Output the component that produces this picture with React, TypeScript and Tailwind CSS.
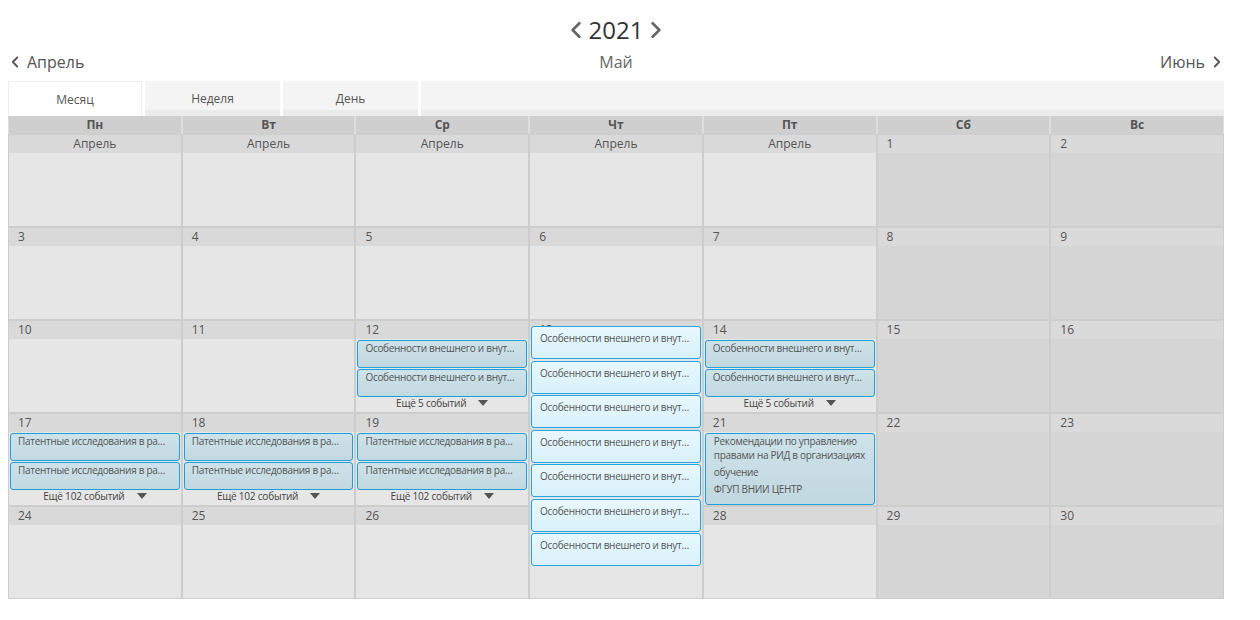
import React from "react";

type Ev = { title: string; lines?: string[]; tall?: boolean };
type Day = {
  label: string;
  prev?: boolean;
  weekend?: boolean;
  events?: Ev[];
  more?: string;
};

const WEEKDAYS = ["Пн", "Вт", "Ср", "Чт", "Пт", "Сб", "Вс"];

const OSOB = "Особенности внешнего и внутреннего контроля качества";
const PATENT = "Патентные исследования в рамках проектов";

const osob: Ev[] = [{ title: OSOB }, { title: OSOB }];
const patent: Ev[] = [{ title: PATENT }, { title: PATENT }];

// сетка мая 2021
const weeks: Day[][] = [
  [
    { label: "Апрель", prev: true },
    { label: "Апрель", prev: true },
    { label: "Апрель", prev: true },
    { label: "Апрель", prev: true },
    { label: "Апрель", prev: true },
    { label: "1", weekend: true },
    { label: "2", weekend: true },
  ],
  [
    { label: "3" },
    { label: "4" },
    { label: "5" },
    { label: "6" },
    { label: "7" },
    { label: "8", weekend: true },
    { label: "9", weekend: true },
  ],
  [
    { label: "10" },
    { label: "11" },
    { label: "12", events: osob, more: "Ещё 5 событий" },
    { label: "13" },
    { label: "14", events: osob, more: "Ещё 5 событий" },
    { label: "15", weekend: true },
    { label: "16", weekend: true },
  ],
  [
    { label: "17", events: patent, more: "Ещё 102 событий" },
    { label: "18", events: patent, more: "Ещё 102 событий" },
    { label: "19", events: patent, more: "Ещё 102 событий" },
    { label: "20" },
    {
      label: "21",
      events: [
        {
          title: "Рекомендации по управлению правами на РИД в организациях",
          lines: ["обучение", "ФГУП ВНИИ ЦЕНТР"],
          tall: true,
        },
      ],
    },
    { label: "22", weekend: true },
    { label: "23", weekend: true },
  ],
  [
    { label: "24" },
    { label: "25" },
    { label: "26" },
    { label: "27" },
    { label: "28" },
    { label: "29", weekend: true },
    { label: "30", weekend: true },
  ],
];

// раскрытый список событий четверга
const expanded = Array.from({ length: 7 }, () => OSOB);

function Chevron({ dir, className }: { dir: "left" | "right"; className?: string }) {
  return (
    <svg viewBox="0 0 10 16" className={className} fill="none">
      <polyline
        points={dir === "left" ? "8,2 2,8 8,14" : "2,2 8,8 2,14"}
        stroke="currentColor"
        strokeWidth="2.4"
        strokeLinecap="round"
        strokeLinejoin="round"
      />
    </svg>
  );
}

function Caret() {
  return (
    <svg viewBox="0 0 10 6" className="w-[10px] h-[6px]">
      <polygon points="0,0 10,0 5,6" fill="#555" />
    </svg>
  );
}

function EventBox({ ev }: { ev: Ev }) {
  if (ev.tall) {
    return (
      <div className="mx-px mt-px h-[72px] rounded-[3px] border border-[#1d9fd9] bg-[linear-gradient(#cde2e9,#c2d8e0)] pl-[8px] pr-[4px] pt-px text-[10px] tracking-[-0.3px] leading-[13.5px] text-[#555] relative z-10">
        <div>{ev.title}</div>
        {ev.lines?.map((l) => (
          <div key={l} className="mt-[3.5px]">
            {l}
          </div>
        ))}
      </div>
    );
  }
  return (
    <div className="mx-px mt-px h-[28px] rounded-[3px] border border-[#1d9fd9] bg-[linear-gradient(#cde2e9,#c2d8e0)] px-[7px] pt-[1px] text-[10px] tracking-[-0.3px] leading-[13px] text-[#555]">
      <div className="truncate">{ev.title}</div>
    </div>
  );
}

function Cell({ day }: { day: Day }) {
  return (
    <div className={day.weekend ? "bg-[#d5d5d5]" : "bg-[#e6e6e6]"}>
      <div
        className={`h-[18px] text-[12px] leading-[18px] text-[#555] ${
          day.weekend ? "bg-[#dadada]" : "bg-[#d9d9d9]"
        } ${day.prev ? "text-center" : "pl-[9px]"}`}
      >
        {day.label}
      </div>
      {day.events?.map((ev, i) => (
        <EventBox key={i} ev={ev} />
      ))}
      {day.more && (
        <div className="flex items-center justify-center gap-[12px] h-[12px] text-[10px] tracking-[-0.2px] text-[#444]">
          <span>{day.more}</span>
          <Caret />
        </div>
      )}
    </div>
  );
}

export default function App() {
  return (
    <div
      className="w-[1260px] h-[620px] bg-white"
      style={{ fontFamily: '"Open Sans", "Noto Sans", sans-serif' }}
    >
      <div className="ml-2 w-[1216px]">
        {/* год */}
        <div className="flex items-center justify-center gap-[7px] pt-[14px] h-[46px] text-[#333]">
          <Chevron dir="left" className="w-[12px] h-[18px] text-[#666]" />
          <span className="text-[24px] leading-[30px]">2021</span>
          <Chevron dir="right" className="w-[12px] h-[18px] text-[#666]" />
        </div>

        {/* месяцы */}
        <div className="flex items-center h-[32px] text-[16px] text-[#555]">
          <div className="flex-1 flex items-center gap-[8px] pl-[3px]">
            <Chevron dir="left" className="w-[8px] h-[12px] text-[#555]" />
            <span>Апрель</span>
          </div>
          <span className="text-[#666]">Май</span>
          <div className="flex-1 flex items-center justify-end gap-[8px] pr-[3px]">
            <span>Июнь</span>
            <Chevron dir="right" className="w-[8px] h-[12px] text-[#555]" />
          </div>
        </div>

        {/* вкладки */}
        <div className="flex gap-[3px] mt-[3px] h-[35px] text-[12px] text-[#555]">
          <div className="w-[134px] border border-[#ececec] border-b-0 bg-white text-center leading-[36px]">
            Месяц
          </div>
          <div className="w-[135px] bg-[linear-gradient(to_bottom,#f4f4f4_29px,#ebebeb_29px)] text-center leading-[35px]">
            Неделя
          </div>
          <div className="w-[135px] bg-[linear-gradient(to_bottom,#f4f4f4_29px,#ebebeb_29px)] text-center leading-[35px]">
            День
          </div>
          <div className="flex-1 bg-[linear-gradient(to_bottom,#f4f4f4_29px,#ebebeb_29px)]" />
        </div>

        {/* дни недели */}
        <div className="grid grid-cols-7 gap-[2px] bg-[#dedede] px-px">
          {WEEKDAYS.map((d) => (
            <div
              key={d}
              className="h-[18px] bg-[#cfcfcf] text-center text-[12px] leading-[18px] font-bold text-[#555]"
            >
              {d}
            </div>
          ))}
        </div>

        {/* сетка */}
        <div className="relative">
          <div className="grid grid-cols-7 auto-rows-[91px] gap-[2px] bg-[#cdcdcd] p-px">
            {weeks.flat().map((day, i) => (
              <Cell key={i} day={day} />
            ))}
          </div>

          <div className="absolute left-[523px] top-[192px] w-[170px] flex flex-col gap-[1.5px] z-20">
            {expanded.map((t, i) => (
              <div
                key={i}
                className="h-[33px] rounded-[3px] border border-[#22a6e0] bg-[linear-gradient(#e8f7fd,#d8f1fb)] px-[8px] pt-[5px] text-[10px] tracking-[-0.3px] leading-[13px] text-[#555]"
              >
                <div className="truncate">{t}</div>
              </div>
            ))}
          </div>
        </div>
      </div>
    </div>
  );
}
